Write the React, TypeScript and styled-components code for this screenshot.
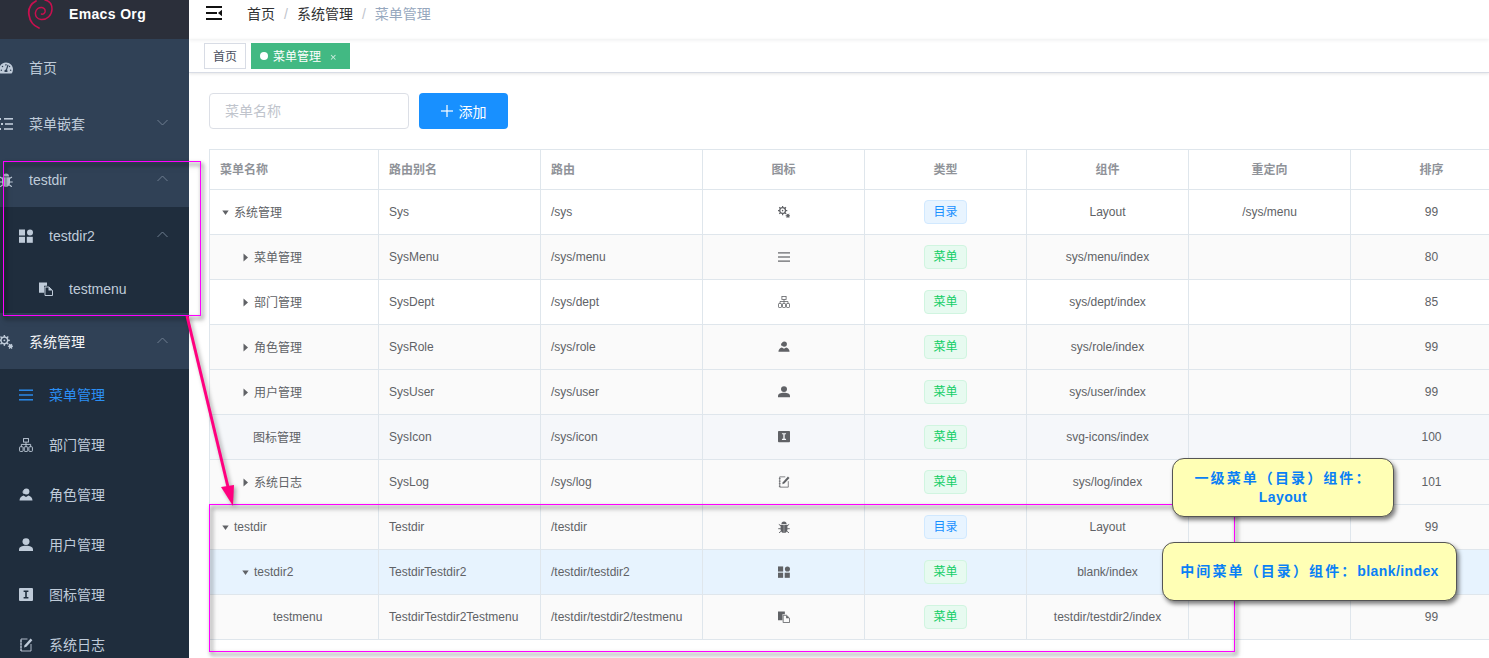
import React from 'react';
import styled, { createGlobalStyle } from 'styled-components';
import { FaTachometerAlt } from 'react-icons/fa';

const GlobalStyle = createGlobalStyle`
    html, body {
        margin: 0;
        padding: 0;
        background: #fff;
        font-family: "Liberation Sans", "Noto Sans CJK SC", sans-serif;
    }
`;

const Page = styled.div`
    position: relative;
    display: flex;
    width: 1489px;
    height: 658px;
    overflow: hidden;
`;

/* sidebar */
const Sidebar = styled.aside`
    flex: 0 0 189px;
    height: 658px;
    overflow: hidden;
    background: #1f2d3d;
`;

const Logo = styled.div`
    position: relative;
    display: flex;
    height: 39px;
    padding-left: 69px;
    box-sizing: border-box;
    background: #2b2f3a;
    color: #fff;
    font-size: 14px;
    font-weight: bold;
    line-height: 29px;
    letter-spacing: 0.35px;
`;

const Swirl = styled.svg`
    position: absolute;
    left: 27px;
    top: 0;
`;

const MenuRow = styled.div<{ $level: number; $tall: boolean; $active?: boolean }>`
    display: flex;
    align-items: center;
    height: ${p => (p.$tall ? 56 : 50)}px;
    padding: 2px 21px 0 ${p => p.$level * 20}px;
    box-sizing: border-box;
    background: ${p => (p.$level === 0 ? '#304156' : '#1f2d3d')};
    color: ${p => (p.$active ? '#2b8ff5' : '#bfcbd9')};
    font-size: 14px;
`;

const MenuIcon = styled.span`
    display: flex;
    flex: 0 0 14px;
    margin: 0 16px 0 -1px;
`;

const MenuLabel = styled.span<{ $bright?: boolean; $cjk: boolean }>`
    flex: 1;
    padding-bottom: ${p => (p.$cjk ? 2 : 0)}px;
    color: ${p => (p.$bright ? '#f4f4f5' : 'inherit')};
`;

const Chevron = styled.svg`
    color: #6f7f90;
    margin-top: -4px;
`;

/* top bars */
const Main = styled.main`
    flex: 1;
    min-width: 0;
    overflow: hidden;
`;

const Navbar = styled.header`
    display: flex;
    align-items: flex-start;
    height: 39px;
    padding: 6px 0 0 17px;
    box-sizing: border-box;
    box-shadow: 0 1px 4px rgba(0, 21, 41, 0.08);
`;

const Hamburger = styled.svg`
    margin-right: 25px;
    color: #111;
`;

const Crumb = styled.span<{ $last?: boolean }>`
    color: ${p => (p.$last ? '#97a8be' : '#303133')};
    font-size: 14px;
    line-height: 17px;
`;

const CrumbSlash = styled.span`
    margin: 0 9px;
    color: #c0c4cc;
    font-size: 14px;
    line-height: 17px;
`;

const TagsBar = styled.nav`
    display: flex;
    gap: 5px;
    height: 34px;
    padding: 4px 0 0 15px;
    box-sizing: border-box;
    border-bottom: 1px solid #d8dce5;
    box-shadow: 0 1px 3px rgba(0, 0, 0, 0.1);
`;

const Tag = styled.div<{ $active?: boolean }>`
    display: flex;
    align-items: center;
    height: 26px;
    padding: 0 8px 2px;
    box-sizing: border-box;
    border: 1px solid ${p => (p.$active ? '#42b983' : '#d8dce5')};
    background: ${p => (p.$active ? '#42b983' : '#fff')};
    color: ${p => (p.$active ? '#fff' : '#495060')};
    font-size: 12px;
`;

const TagDot = styled.i`
    width: 8px;
    height: 8px;
    margin: 2px 5px 0 0;
    border-radius: 50%;
    background: #fff;
`;

const TagClose = styled.span`
    margin: 3px 5px 0 9px;
    font-size: 11px;
    opacity: 0.75;
`;

/* content */
const Content = styled.section`
    padding: 20px 0 0 20px;
`;

const FilterRow = styled.div`
    display: flex;
    gap: 10px;
    margin-bottom: 20px;
`;

const SearchBox = styled.div`
    width: 200px;
    height: 36px;
    padding-left: 15px;
    box-sizing: border-box;
    border: 1px solid #dcdfe6;
    border-radius: 4px;
    color: #c0c4cc;
    font-size: 14px;
    line-height: 34px;
`;

const AddButton = styled.div`
    display: flex;
    align-items: center;
    justify-content: center;
    gap: 6px;
    width: 89px;
    height: 36px;
    border-radius: 4px;
    background: #1890ff;
    color: #fff;
    font-size: 14px;
`;

const Table = styled.table`
    width: 1304px;
    table-layout: fixed;
    border-collapse: separate;
    border-spacing: 0;
    border-top: 1px solid #dfe6ec;
    border-left: 1px solid #dfe6ec;
    font-size: 12px;
`;

const HeadCell = styled.th<{ $center?: boolean }>`
    height: 40px;
    padding: 0 10px 2px;
    box-sizing: border-box;
    border-right: 1px solid #dfe6ec;
    border-bottom: 1px solid #dfe6ec;
    color: #909399;
    font-weight: bold;
    text-align: ${p => (p.$center ? 'center' : 'left')};
`;

const Row = styled.tr<{ $bg: string }>`
    background: ${p => p.$bg};
`;

const Cell = styled.td<{ $center?: boolean }>`
    height: 45px;
    padding: 0 10px;
    box-sizing: border-box;
    border-right: 1px solid #dfe6ec;
    border-bottom: 1px solid #dfe6ec;
    color: #606266;
    white-space: nowrap;
    text-align: ${p => (p.$center ? 'center' : 'left')};
`;

const TreeName = styled.div<{ $level: number }>`
    display: flex;
    align-items: center;
    padding-left: ${p => p.$level * 20}px;
`;

const TreeLabel = styled.span<{ $cjk: boolean }>`
    padding-bottom: ${p => (p.$cjk ? 2 : 0)}px;
`;

const Caret = styled.span<{ $empty: boolean }>`
    display: flex;
    flex: 0 0 ${p => (p.$empty ? 13 : 14)}px;
    color: #606266;
`;

const TableIcon = styled.span`
    display: inline-flex;
    vertical-align: middle;
    margin-top: -2px;
    color: #606266;
`;

const TypeTag = styled.span<{ $dir: boolean }>`
    display: inline-block;
    height: 24px;
    padding: 0 8px;
    box-sizing: border-box;
    border: 1px solid ${p => (p.$dir ? '#d1e9ff' : '#d0f5e0')};
    border-radius: 4px;
    background: ${p => (p.$dir ? '#e8f4ff' : '#e7faf0')};
    color: ${p => (p.$dir ? '#1890ff' : '#13ce66')};
    font-size: 12px;
    line-height: 22px;
`;

/* annotations drawn over the screenshot */
const Frame = styled.div<{ $l: number; $t: number; $w: number; $h: number }>`
    position: absolute;
    left: ${p => p.$l}px;
    top: ${p => p.$t}px;
    width: ${p => p.$w}px;
    height: ${p => p.$h}px;
    box-sizing: border-box;
    border: 1px solid #f0f;
    filter: drop-shadow(2px 3px 2px rgba(0, 0, 0, 0.7)) drop-shadow(1px 2px 2px rgba(0, 0, 0, 0.2));
    pointer-events: none;
`;

const ArrowLayer = styled.svg`
    position: absolute;
    left: 0;
    top: 0;
    filter: drop-shadow(2px 2px 2px rgba(0, 0, 0, 0.35));
`;

const Callout = styled.div<{ $l: number; $t: number; $w: number }>`
    position: absolute;
    left: ${p => p.$l}px;
    top: ${p => p.$t}px;
    display: flex;
    flex-direction: column;
    align-items: center;
    justify-content: center;
    width: ${p => p.$w}px;
    height: 59px;
    box-sizing: border-box;
    border: 1px solid #555;
    border-radius: 12px;
    background: #ffffb5;
    box-shadow: 2px 3px 4px rgba(0, 0, 0, 0.5);
    color: #0a80f5;
    font-size: 14px;
    font-weight: bold;
    line-height: 19px;
`;

const CalloutCjk = styled.span`
    letter-spacing: 2.1px;
`;

const CalloutLatin = styled.span`
    letter-spacing: 0.4px;
`;

type TIcon = { size?: number };

const Svg: React.FC<TIcon & { children: React.ReactNode; box?: number }> = ({ size = 14, box = 14, children }) => (
    <svg width={size} height={size} viewBox={`0 0 ${box} ${box}`} fill="currentColor">
        {children}
    </svg>
);

const Teeth: React.FC<{ cx: number; cy: number; from: number; to: number; count: number; width: number }> = ({
    cx,
    cy,
    from,
    to,
    count,
    width,
}) => (
    <g stroke="currentColor" strokeWidth={width}>
        {Array.from({ length: count }, (_, i) => {
            const a = (i * 2 * Math.PI) / count;
            return (
                <line
                    key={i}
                    x1={cx + from * Math.cos(a)}
                    y1={cy + from * Math.sin(a)}
                    x2={cx + to * Math.cos(a)}
                    y2={cy + to * Math.sin(a)}
                />
            );
        })}
    </g>
);

const Cogs: React.FC<TIcon> = ({ size }) => (
    <Svg size={size} box={12}>
        <circle cx="4.600" cy="4.600" r="2.900" fill="none" stroke="currentColor" strokeWidth="1.300" />
        <circle cx="4.600" cy="4.600" r="0.800" />
        <Teeth cx={4.6} cy={4.6} from={3} to={4.7} count={8} width={1.2} />
        <circle cx="9.900" cy="9.700" r="1.700" />
        <Teeth cx={9.9} cy={9.7} from={1.4} to={2.3} count={6} width={0.9} />
    </Svg>
);

const Lines: React.FC<TIcon> = ({ size }) => (
    <Svg size={size}>
        <rect x="0" y="1.5" width="14" height="1.4" />
        <rect x="0" y="6.3" width="14" height="1.4" />
        <rect x="0" y="11.1" width="14" height="1.4" />
    </Svg>
);

const ListTree: React.FC<TIcon> = ({ size }) => (
    <Svg size={size}>
        <rect x="0" y="1" width="2" height="2" />
        <rect x="5" y="1" width="9" height="1.6" />
        <rect x="2" y="6" width="2" height="2" />
        <rect x="6" y="6.2" width="8" height="1.6" />
        <rect x="0" y="11" width="2" height="2" />
        <rect x="5" y="11.2" width="9" height="1.6" />
    </Svg>
);

const OrgTree: React.FC<TIcon> = ({ size }) => (
    <Svg size={size} box={12}>
        <g fill="none" stroke="currentColor" strokeWidth="0.8">
            <rect x="3.900" y="0.500" width="4.200" height="3" />
            <path d="M6 3.500V7.500M2 7.500V5.500h8v2" />
            <rect x="0.500" y="7.500" width="3" height="4" rx="0.6" />
            <rect x="4.500" y="7.500" width="3" height="4" rx="0.6" />
            <rect x="8.500" y="7.500" width="3" height="4" rx="0.6" />
        </g>
    </Svg>
);

const Users: React.FC<TIcon> = ({ size }) => (
    <Svg size={size}>
        <circle cx="7.4" cy="3.6" r="3" />
        <path d="M3.5 4.2a2.2 2.2 0 0 1 1.6-2.1 4 4 0 0 0 .3 4A2.2 2.2 0 0 1 3.5 4.2z" />
        <path d="M0.5 12.5c0-2.6 1.8-4.4 4-5l2.5 1.6 2.5-1.6c2.2.6 4 2.4 4 5z" />
    </Svg>
);

const User: React.FC<TIcon> = ({ size }) => (
    <Svg size={size}>
        <ellipse cx="7" cy="3.6" rx="3.5" ry="3.4" />
        <path d="M0 13v-1.4C0 9 2.8 7.8 7 7.8s7 1.2 7 3.8V13z" />
    </Svg>
);

const IconI: React.FC<TIcon> = ({ size }) => (
    <Svg size={size}>
        <path
            fillRule="evenodd"
            d="M1 0h12a1 1 0 0 1 1 1v11a1 1 0 0 1-1 1H1a1 1 0 0 1-1-1V1a1 1 0 0 1 1-1zm3.6 2.6v1.3h1.6v5.2H4.6v1.3h4.8V9.1H7.8V3.9h1.6V2.6z"
        />
    </Svg>
);

const EditNote: React.FC<TIcon> = ({ size }) => (
    <Svg size={size}>
        <g fill="none" stroke="currentColor" strokeWidth="0.9">
            <path d="M8.5 1H2v12h10V6" />
            <path d="M1 3h2M1 6h2M1 9h2M1 12h2" />
        </g>
        <path d="M11.6 0.6l1.8 1.6-6 6.6-2.4.8.6-2.4z" />
    </Svg>
);

const Grid: React.FC<TIcon> = ({ size }) => (
    <Svg size={size}>
        <rect x="0" y="0.5" width="6" height="6" />
        <circle cx="11" cy="3.5" r="3" />
        <rect x="0" y="7.8" width="6" height="6" />
        <rect x="7.8" y="7.8" width="6" height="6" />
    </Svg>
);

const Copy: React.FC<TIcon> = ({ size }) => (
    <Svg size={size}>
        <path d="M0 0.5h8v3.2H5.2v7H0z" />
        <path d="M6 5h4l3.5 3.4v5.1H6z" fill="none" stroke="currentColor" strokeWidth="1" />
        <path d="M9.5 5v3.6h4z" />
    </Svg>
);

const Bug: React.FC<TIcon> = ({ size }) => (
    <Svg size={size}>
        <path d="M4 3.600a3 3 0 0 1 6 0z" />
        <path d="M3.400 4.300h3.400V14C4.600 13.800 3 12 3 9.500V5z" />
        <path d="M10.600 4.300H7.200V14c2.200-.2 3.800-2 3.800-4.500V5z" />
        <path d="M3.500 5.500L1 4M3.300 9H0.300M3.800 11.800L1.200 13.800M10.500 5.500L13 4M10.700 9h3M10.200 11.800l2.600 2" stroke="currentColor" strokeWidth="1.100" />
    </Svg>
);

const Gauge: React.FC<TIcon> = ({ size = 14 }) => <FaTachometerAlt size={size} />;

const ChevronIcon: React.FC<{ up: boolean }> = ({ up }) => (
    <Chevron width="11" height="7" viewBox="0 0 11 7" fill="none" stroke="currentColor" strokeWidth="1">
        <path d={up ? 'M0.5 6L5.5 1l5 5' : 'M0.5 1l5 5 5-5'} />
    </Chevron>
);

const isCjk = (text: string) => /[\u4e00-\u9fff]/.test(text);

const menu = [
    { label: '首页', level: 0, tall: true, Icon: Gauge },
    { label: '菜单嵌套', level: 0, tall: true, Icon: ListTree, arrow: 'down' },
    { label: 'testdir', level: 0, tall: true, Icon: Bug, arrow: 'up' },
    { label: 'testdir2', level: 1, tall: true, Icon: Grid, arrow: 'up' },
    { label: 'testmenu', level: 2, tall: false, Icon: Copy },
    { label: '系统管理', level: 0, tall: true, Icon: Cogs, arrow: 'up', bright: true },
    { label: '菜单管理', level: 1, tall: false, Icon: Lines, active: true },
    { label: '部门管理', level: 1, tall: false, Icon: OrgTree },
    { label: '角色管理', level: 1, tall: false, Icon: Users },
    { label: '用户管理', level: 1, tall: false, Icon: User },
    { label: '图标管理', level: 1, tall: false, Icon: IconI },
    { label: '系统日志', level: 1, tall: false, Icon: EditNote },
];

const columns = ['菜单名称', '路由别名', '路由', '图标', '类型', '组件', '重定向', '排序'];

const WHITE = '#fff';
const STRIPE = '#fafafa';

const rows = [
    { name: '系统管理', level: 0, caret: 'open', alias: 'Sys', path: '/sys', Icon: Cogs, dir: true, comp: 'Layout', redirect: '/sys/menu', sort: 99, bg: WHITE },
    { name: '菜单管理', level: 1, caret: 'closed', alias: 'SysMenu', path: '/sys/menu', Icon: Lines, comp: 'sys/menu/index', sort: 80, bg: STRIPE },
    { name: '部门管理', level: 1, caret: 'closed', alias: 'SysDept', path: '/sys/dept', Icon: OrgTree, comp: 'sys/dept/index', sort: 85, bg: WHITE },
    { name: '角色管理', level: 1, caret: 'closed', alias: 'SysRole', path: '/sys/role', Icon: Users, comp: 'sys/role/index', sort: 99, bg: STRIPE },
    { name: '用户管理', level: 1, caret: 'closed', alias: 'SysUser', path: '/sys/user', Icon: User, comp: 'sys/user/index', sort: 99, bg: STRIPE },
    { name: '图标管理', level: 1, alias: 'SysIcon', path: '/sys/icon', Icon: IconI, comp: 'svg-icons/index', sort: 100, bg: '#f5f7fa' },
    { name: '系统日志', level: 1, caret: 'closed', alias: 'SysLog', path: '/sys/log', Icon: EditNote, comp: 'sys/log/index', sort: 101, bg: STRIPE },
    { name: 'testdir', level: 0, caret: 'open', alias: 'Testdir', path: '/testdir', Icon: Bug, dir: true, comp: 'Layout', sort: 99, bg: STRIPE },
    // sort of this row sits under the second callout in the picture
    { name: 'testdir2', level: 1, caret: 'open', alias: 'TestdirTestdir2', path: '/testdir/testdir2', Icon: Grid, comp: 'blank/index', bg: '#e7f3fe' },
    { name: 'testmenu', level: 2, alias: 'TestdirTestdir2Testmenu', path: '/testdir/testdir2/testmenu', Icon: Copy, comp: 'testdir/testdir2/index', sort: 99, bg: STRIPE },
];

const App: React.FC = () => (
    <Page>
        <GlobalStyle />
        <Sidebar>
            <Logo>
                <Swirl width="28" height="31" viewBox="0 0 28 31" fill="none" stroke="#c8104f" strokeLinecap="round">
                    <path strokeWidth="1.8" d="M9 1C3.500 4 1 9 2 15c.8 6 5 11 10 13" />
                    <path strokeWidth="1.5" d="M18 0c5 1 7 5 7 9 0 6-5 11-11 10.500-4-.5-6-3.500-5.500-7C9 9 12 7 15 7.500c2.500.5 3.500 2.500 3 4.500-.5 1.500-2 2.500-3.500 2" />
                </Swirl>
                Emacs Org
            </Logo>
            {menu.map(({ label, level, tall, Icon, arrow, active, bright }) => (
                <MenuRow key={label + level} $level={level} $tall={tall} $active={active}>
                    <MenuIcon>
                        <Icon size={14} />
                    </MenuIcon>
                    <MenuLabel $bright={bright} $cjk={isCjk(label)}>
                        {label}
                    </MenuLabel>
                    {arrow && <ChevronIcon up={arrow === 'up'} />}
                </MenuRow>
            ))}
        </Sidebar>

        <Main>
            <Navbar>
                <Hamburger width="16" height="14" viewBox="0 0 16 14" fill="currentColor">
                    <rect x="0" y="0" width="16" height="2" />
                    <rect x="0" y="6" width="11" height="2" />
                    <rect x="0" y="12" width="16" height="2" />
                    <path d="M16 3.800v6.400L12 7z" />
                </Hamburger>
                <Crumb>首页</Crumb>
                <CrumbSlash>/</CrumbSlash>
                <Crumb>系统管理</Crumb>
                <CrumbSlash>/</CrumbSlash>
                <Crumb $last>菜单管理</Crumb>
            </Navbar>
            <TagsBar>
                <Tag>首页</Tag>
                <Tag $active>
                    <TagDot />
                    菜单管理
                    <TagClose>×</TagClose>
                </Tag>
            </TagsBar>
            <Content>
                <FilterRow>
                    <SearchBox>菜单名称</SearchBox>
                    <AddButton>
                        <svg width="12" height="12" viewBox="0 0 12 12" fill="currentColor">
                            <rect x="5.4" y="0" width="1.2" height="12" />
                            <rect x="0" y="5.4" width="12" height="1.2" />
                        </svg>
                        添加
                    </AddButton>
                </FilterRow>
                <Table>
                    <colgroup>
                        <col width="169" />
                        {columns.slice(1).map(c => (
                            <col key={c} width="162" />
                        ))}
                    </colgroup>
                    <thead>
                        <tr>
                            {columns.map((c, i) => (
                                <HeadCell key={c} $center={i > 2}>
                                    {c}
                                </HeadCell>
                            ))}
                        </tr>
                    </thead>
                    <tbody>
                        {rows.map(r => (
                            <Row key={r.alias} $bg={r.bg}>
                                <Cell>
                                    <TreeName $level={r.level}>
                                        <Caret $empty={!r.caret}>
                                            {r.caret && (
                                                <svg width="9" height="9" viewBox="0 0 9 9" fill="currentColor">
                                                    <path d={r.caret === 'open' ? 'M2.300 2.500h6.400L5.500 7z' : 'M3.500 0.500v8L8 4.500z'} />
                                                </svg>
                                            )}
                                        </Caret>
                                        <TreeLabel $cjk={isCjk(r.name)}>{r.name}</TreeLabel>
                                    </TreeName>
                                </Cell>
                                <Cell>{r.alias}</Cell>
                                <Cell>{r.path}</Cell>
                                <Cell $center>
                                    <TableIcon>
                                        <r.Icon size={12} />
                                    </TableIcon>
                                </Cell>
                                <Cell $center>
                                    <TypeTag $dir={!!r.dir}>{r.dir ? '目录' : '菜单'}</TypeTag>
                                </Cell>
                                <Cell $center>{r.comp}</Cell>
                                <Cell $center>{r.redirect}</Cell>
                                <Cell $center>{r.sort}</Cell>
                            </Row>
                        ))}
                    </tbody>
                </Table>
            </Content>
        </Main>

        <Frame $l={3} $t={161} $w={198} $h={155} />
        <Frame $l={209} $t={504} $w={1026} $h={148} />
        <ArrowLayer width="260" height="520" viewBox="0 0 260 520">
            <path d="M187 316L228 487" stroke="#ff007f" strokeWidth="3" fill="none" />
            <path d="M233 506L221 487l13-2z" fill="#ff007f" />
        </ArrowLayer>
        <Callout $l={1172} $t={458} $w={222}>
            <CalloutCjk>一级菜单（目录）组件：</CalloutCjk>
            <CalloutLatin>Layout</CalloutLatin>
        </Callout>
        <Callout $l={1162} $t={542} $w={295}>
            <span>
                <CalloutCjk>中间菜单（目录）组件：</CalloutCjk>
                <CalloutLatin>blank/index</CalloutLatin>
            </span>
        </Callout>
    </Page>
);

export default App;
